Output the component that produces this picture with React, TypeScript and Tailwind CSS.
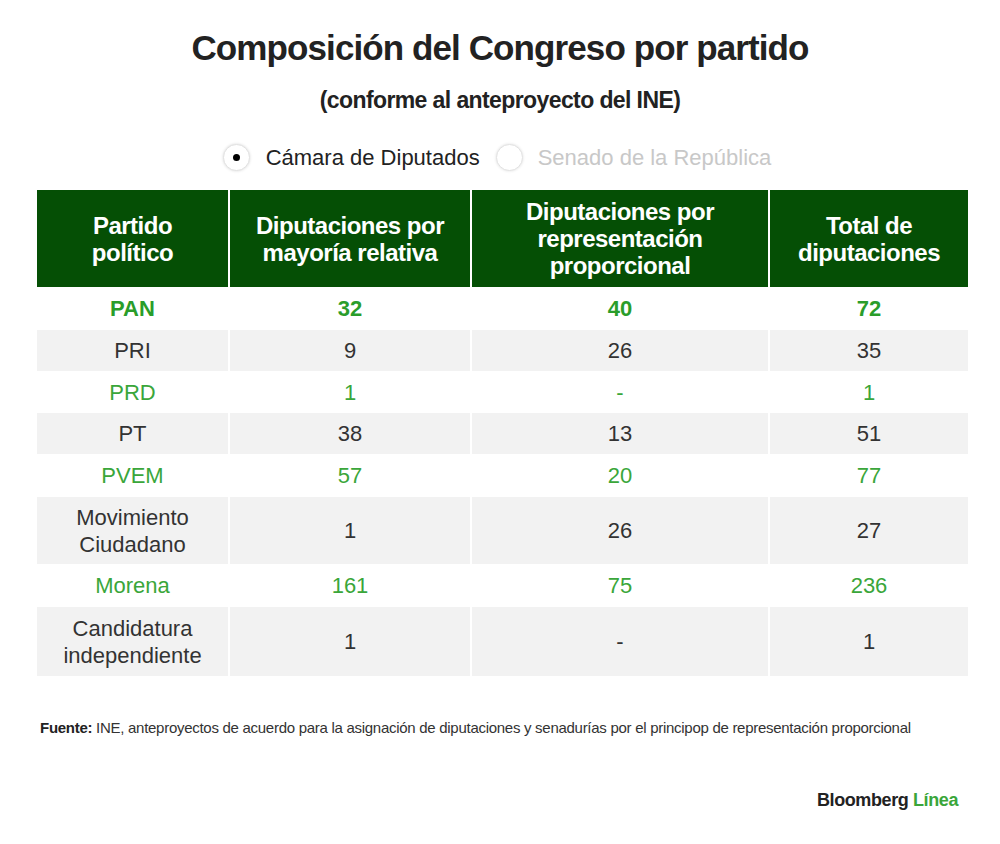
import React from 'react';

type Row = { party: string; mr: string; rp: string; total: string; tone: 'bold' | 'green' | 'gray'; h: string };

const rows: Row[] = [
  { party: 'PAN', mr: '32', rp: '40', total: '72', tone: 'bold', h: 'h-[41px]' },
  { party: 'PRI', mr: '9', rp: '26', total: '35', tone: 'gray', h: 'h-[41px]' },
  { party: 'PRD', mr: '1', rp: '-', total: '1', tone: 'green', h: 'h-[40px]' },
  { party: 'PT', mr: '38', rp: '13', total: '51', tone: 'gray', h: 'h-[41px]' },
  { party: 'PVEM', mr: '57', rp: '20', total: '77', tone: 'green', h: 'h-[41px]' },
  { party: 'Movimiento\nCiudadano', mr: '1', rp: '26', total: '27', tone: 'gray', h: 'h-[67px]' },
  { party: 'Morena', mr: '161', rp: '75', total: '236', tone: 'green', h: 'h-[41px]' },
  { party: 'Candidatura\nindependiente', mr: '1', rp: '-', total: '1', tone: 'gray', h: 'h-[69px]' },
];

const headers = ['Partido\npolítico', 'Diputaciones por\nmayoría relativa', 'Diputaciones por\nrepresentación\nproporcional', 'Total de\ndiputaciones'];

function cellClass(row: Row) {
  const bg = row.tone === 'gray' ? 'bg-[#f2f2f2] text-[#333333]' : 'bg-white';
  const text = row.tone === 'bold' ? 'font-bold text-[#2a9d2a]' : row.tone === 'green' ? 'text-[#3aa63a]' : '';
  return `flex items-center justify-center text-center whitespace-pre-line leading-[27px] text-[22px] ${row.h} ${bg} ${text}`;
}

export default function App() {
  return (
    <div className="w-[1000px] h-[844px] bg-white font-['Liberation_Sans',Arial,sans-serif] text-[#222]">
      <h1 className="pt-[28px] text-center text-[35px] font-bold tracking-[-0.9px] leading-[40px] text-[#222]">
        Composición del Congreso por partido
      </h1>
      <p className="mt-[18px] text-center text-[23px] font-bold tracking-[-0.6px] leading-[28px] text-[#222]">
        (conforme al anteproyecto del INE)
      </p>

      <div className="mt-[30px] flex items-center justify-center pr-[6px]">
        <div className="flex items-center gap-[16px]">
          <span className="flex h-[27px] w-[27px] items-center justify-center rounded-full border border-[#e2e2e2] bg-white shadow-[0_0_3px_rgba(0,0,0,0.15)]">
            <span className="h-[7px] w-[7px] rounded-full bg-black" />
          </span>
          <span className="text-[22px] text-[#222] leading-[27px]">Cámara de Diputados</span>
        </div>
        <div className="ml-[16px] flex items-center gap-[15px]">
          <span className="h-[27px] w-[27px] rounded-full border border-[#e2e2e2] bg-white shadow-[0_0_3px_rgba(0,0,0,0.12)]" />
          <span className="text-[22px] text-[#c8c8c8] leading-[27px]">Senado de la República</span>
        </div>
      </div>

      <div className="mt-[19px] ml-[37px] grid w-[931px] grid-cols-[191px_240px_296px_198px] gap-x-[2px] gap-y-[1px]">
        {headers.map((h) => (
          <div
            key={h}
            className="flex h-[97px] items-center justify-center whitespace-pre-line bg-[#054f05] text-center text-[24px] font-bold leading-[27px] tracking-[-0.5px] text-white"
          >
            {h}
          </div>
        ))}
        {rows.map((row) => (
          <React.Fragment key={row.party}>
            <div className={cellClass(row)}>{row.party}</div>
            <div className={cellClass(row)}>{row.mr}</div>
            <div className={cellClass(row)}>{row.rp}</div>
            <div className={cellClass(row)}>{row.total}</div>
          </React.Fragment>
        ))}
      </div>

      <p className="mt-[42px] ml-[40px] text-[15px] leading-[20px] tracking-[-0.28px] text-[#333]">
        <span className="font-bold text-[#222]">Fuente:</span> INE, anteproyectos de acuerdo para la asignación de diputaciones y senadurías por el principop de representación proporcional
      </p>

      <div className="mt-[50px] mr-[42px] text-right text-[18px] leading-[24px] font-bold tracking-[-0.4px] text-[#222]">
        Bloomberg <span className="text-[#3aa63a]">Línea</span>
      </div>
    </div>
  );
}
